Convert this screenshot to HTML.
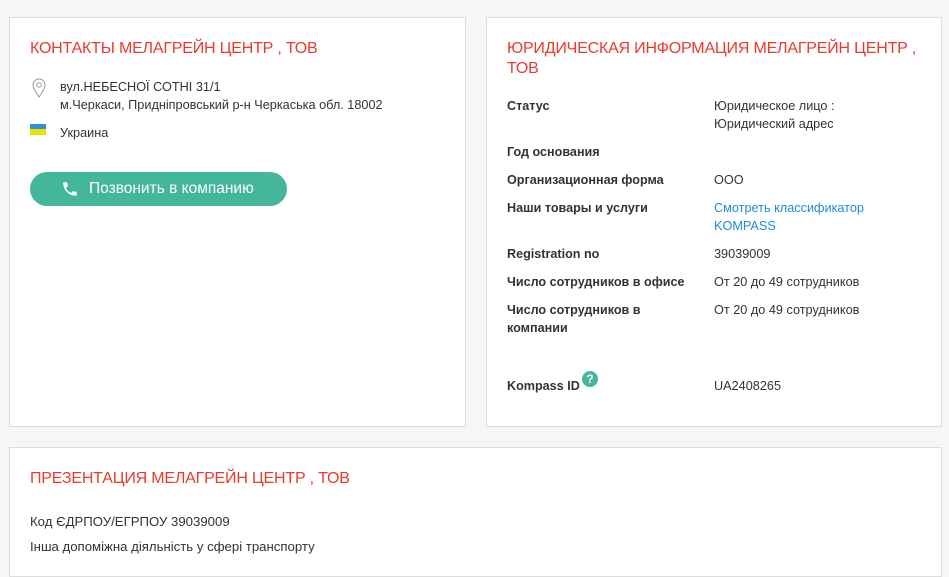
<!DOCTYPE html>
<html><head><meta charset="utf-8"><style>
body{margin:0;background:#f6f6f6;font-family:"Liberation Sans",sans-serif;color:#333;width:949px;height:567px;overflow:hidden;position:relative}
.card{position:absolute;background:#fff;border:1px solid #ddd;box-sizing:border-box}
h2{margin:0;font-weight:normal;color:#ea3a2e;font-size:16px;line-height:20px;letter-spacing:-0.2px}
.t{font-size:12.7px;position:absolute;line-height:18px}
.b{font-weight:bold;font-size:12.6px}
</style></head><body>
<div class="card" style="left:9px;top:17px;width:457px;height:410px">
<h2 style="position:absolute;left:20px;top:21px">КОНТАКТЫ МЕЛАГРЕЙН ЦЕНТР , ТОВ</h2>
<svg style="position:absolute;left:22px;top:60px" width="14" height="20" viewBox="0 0 14 20"><path d="M7 1a6 6 0 0 0-6 6c0 4 6 12 6 12s6-8 6-12a6 6 0 0 0-6-6z" fill="none" stroke="#999" stroke-width="1"/><circle cx="7" cy="7" r="2.2" fill="none" stroke="#999"/></svg>
<div class="t" style="left:50px;top:60px">вул.НЕБЕСНОЇ СОТНІ 31/1<br>м.Черкаси, Придніпровський р-н Черкаська обл. 18002</div>
<div style="position:absolute;left:20px;top:106px;width:16px;height:11px"><div style="height:5px;background:#2f8ee0"></div><div style="height:6px;background:#f4e000"></div></div>
<div class="t" style="left:50px;top:106px">Украина</div>
<div style="position:absolute;left:20px;top:154px;width:257px;height:34px;border-radius:17px;background:#43b69b;color:#fff;font-size:15.5px;line-height:34px">
<svg style="position:absolute;left:31px;top:8px" width="18" height="18" viewBox="0 0 24 24"><path fill="#fff" d="M6.6 10.8c1.4 2.8 3.8 5.1 6.6 6.6l2.2-2.2c.3-.3.7-.4 1-.2 1.1.4 2.3.6 3.6.6.6 0 1 .4 1 1V20c0 .6-.4 1-1 1C10.6 21 3 13.4 3 4c0-.6.4-1 1-1h3.5c.6 0 1 .4 1 1 0 1.3.2 2.5.6 3.6.1.3 0 .7-.2 1z"/></svg>
<span style="position:absolute;left:59px">Позвонить в компанию</span></div>
</div>
<div class="card" style="left:486px;top:17px;width:456px;height:410px">
<h2 style="position:absolute;left:20px;top:21px;width:420px">ЮРИДИЧЕСКАЯ ИНФОРМАЦИЯ МЕЛАГРЕЙН ЦЕНТР , ТОВ</h2>
<div class="t b" style="left:20px;top:79px">Статус</div><div class="t" style="left:227px;top:79px">Юридическое лицо :<br>Юридический адрес</div>
<div class="t b" style="left:20px;top:125px">Год основания</div>
<div class="t b" style="left:20px;top:153px">Организационная форма</div><div class="t" style="left:227px;top:153px">ООО</div>
<div class="t b" style="left:20px;top:181px">Наши товары и услуги</div><div class="t" style="left:227px;top:181px;color:#1a8fdc">Смотреть классификатор<br>KOMPASS</div>
<div class="t b" style="left:20px;top:227px">Registration no</div><div class="t" style="left:227px;top:227px">39039009</div>
<div class="t b" style="left:20px;top:255px">Число сотрудников в офисе</div><div class="t" style="left:227px;top:255px">От 20 до 49 сотрудников</div>
<div class="t b" style="left:20px;top:283px">Число сотрудников в<br>компании</div><div class="t" style="left:227px;top:283px">От 20 до 49 сотрудников</div>
<div class="t b" style="left:20px;top:359px">Kompass ID</div>
<div style="position:absolute;left:95px;top:353px;width:16px;height:16px;border-radius:50%;background:#43b69b;color:#fff;font-size:12px;font-weight:bold;text-align:center;line-height:16px">?</div>
<div class="t" style="left:227px;top:359px">UA2408265</div>
</div>
<div class="card" style="left:9px;top:447px;width:933px;height:130px">
<h2 style="position:absolute;left:20px;top:21px">ПРЕЗЕНТАЦИЯ МЕЛАГРЕЙН ЦЕНТР , ТОВ</h2>
<div class="t" style="left:20px;top:61px;font-size:13.2px;line-height:25px">Код ЄДРПОУ/ЕГРПОУ 39039009<br>Інша допоміжна діяльність у сфері транспорту</div>
</div>
</body></html>
